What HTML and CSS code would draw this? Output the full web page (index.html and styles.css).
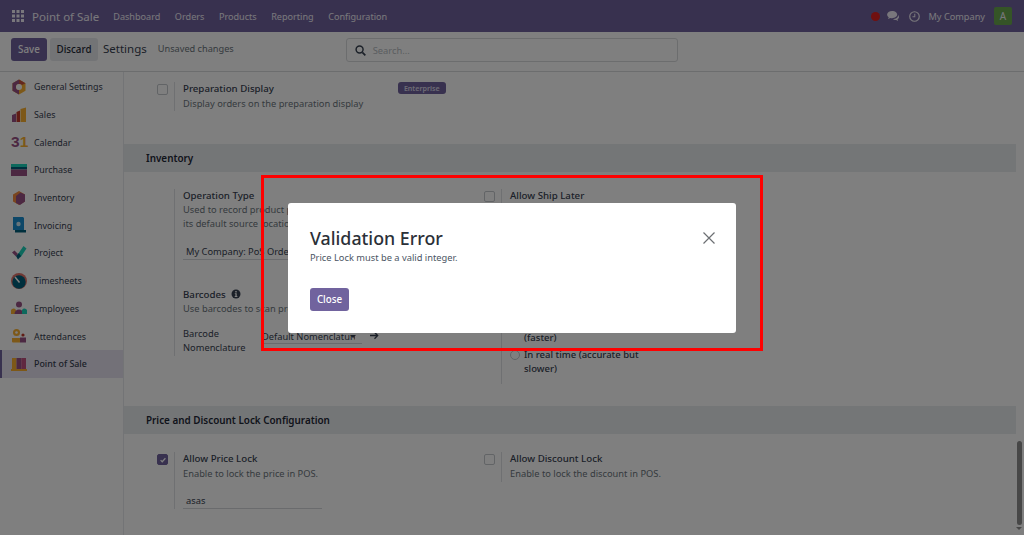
FILE: index.html
```html
<!DOCTYPE html>
<html lang="en">
<head>
<meta charset="utf-8">
<title>Point of Sale Settings</title>
<link rel="stylesheet" href="styles.css">
</head>
<body>
<div class="app">
  <header class="navbar">
    <svg class="apps" viewBox="0 0 12 12" width="12" height="12"><path d="M0 0h3v3H0zM4.500 0h3v3h-3zM9 0h3v3H9zM0 4.500h3v3H0zM4.500 4.500h3v3h-3zM9 4.500h3v3H9zM0 9h3v3H0zM4.500 9h3v3h-3zM9 9h3v3H9z"/></svg>
    <span class="brand">Point of Sale</span>
    <nav class="menu"><span>Dashboard</span><span>Orders</span><span>Products</span><span>Reporting</span><span>Configuration</span></nav>
    <div class="systray">
      <span class="dot"></span>
      <svg class="tray-icon" viewBox="0 0 14 12" width="13" height="11"><path d="M5.500 0C2.500 0 0 1.700 0 3.900c0 1.200.7 2.200 1.800 2.900L1 8.600l2.500-1.100c.6.200 1.300.3 2 .3 3 0 5.500-1.700 5.500-3.900S8.500 0 5.500 0z"/><path d="M12 4.300c.1 2.800-2.600 4.400-5.700 4.500 1 .8 2.300 1.100 3.600.9l2.100 1.100-.6-1.700c1-.6 1.600-1.500 1.600-2.500 0-.9-.4-1.700-1-2.300z"/></svg>
      <svg class="tray-clock" viewBox="0 0 12 12" width="11" height="11"><circle cx="6" cy="6" r="5.200" fill="none" stroke-width="1.300"/><path d="M6.300 3v3.400H3.800" fill="none" stroke-width="1.100"/></svg>
      <span class="company">My Company</span>
      <span class="avatar">A</span>
    </div>
  </header>
  <div class="control">
    <button class="btn save">Save</button>
    <button class="btn discard">Discard</button>
    <span class="crumb">Settings</span>
    <span class="unsaved">Unsaved changes</span>
    <div class="search">
      <svg viewBox="0 0 12 12" width="11" height="11"><circle cx="5" cy="5" r="3.800" fill="none" stroke-width="1.600"/><path d="M8 8l3.300 3.300" fill="none" stroke-width="1.800"/></svg>
      <span>Search...</span>
    </div>
  </div>
  <div class="body">
    <aside class="sidebar">
      <div class="tab"><svg viewBox="0 0 16 16"><path fill="#fbb130" d="M8 .5l6.500 3.700v7.600L8 15.500l-6.500-3.700V4.200z"/><path fill="#985184" d="M8 .5L1.500 4.200v7.600L8 15.500V11a3 3 0 0 1 0-6z"/><path fill="#c9503f" d="M8 .5l6.500 3.700L11 6a3 3 0 0 0-3-1z"/><circle cx="8" cy="8" r="3" fill="#fff"/></svg><span>General Settings</span></div>
      <div class="tab"><svg viewBox="0 0 16 16"><path fill="#985184" d="M1 8l4-1.500V15H1z"/><path fill="#c0392b" d="M5.500 5L9 3.500V15H5.500z"/><path fill="#fbb130" d="M9.500 2L15 .5V15H9.500z"/></svg><span>Sales</span></div>
      <div class="tab"><span class="cal"><b class="c3">3</b><b class="c1">1</b></span><span>Calendar</span></div>
      <div class="tab"><svg viewBox="0 0 16 16" class="wide"><path fill="#1ad3bb" d="M0 2h16v3H0z"/><path fill="#005e7a" d="M0 5h16v2.500H0z"/><path fill="#985184" d="M0 7.500h16V14H0z"/></svg><span>Purchase</span></div>
      <div class="tab"><svg viewBox="0 0 16 16"><path fill="#f58a3c" d="M8 1l6 3.500v7L8 15l-6-3.500v-7z"/><path fill="#985184" d="M9.500 2.500L14 4.500v7L9 15l-4-2V6z"/></svg><span>Inventory</span></div>
      <div class="tab"><svg viewBox="0 0 16 16"><path fill="#1a8fd1" d="M2 0h10l1 1v12H2z"/><path fill="#005e7a" d="M4 13h11v2.500H4z"/><circle cx="7.500" cy="7" r="2.200" fill="#cfe8f5"/></svg><span>Invoicing</span></div>
      <div class="tab"><svg viewBox="0 0 16 16"><path fill="#1ad3bb" d="M7 9l5.500-8 3 2.500-6 9z"/><path fill="#985184" d="M1 7.500L3.500 5.500 7 9 5 11.500z"/><path fill="#005e7a" d="M5 11l3-3 2 3-3 3.500z"/></svg><span>Project</span></div>
      <div class="tab"><svg viewBox="0 0 16 16"><circle cx="8" cy="8" r="8" fill="#e0736a"/><circle cx="8" cy="9" r="6.700" fill="#005e7a"/><path d="M8.500 9.500L4 4" stroke="#fff" stroke-width="1.500"/></svg><span>Timesheets</span></div>
      <div class="tab"><svg viewBox="0 0 16 16" class="wide"><circle cx="8" cy="4.500" r="3" fill="#985184"/><path fill="#fbb130" d="M0 14a3 3 0 0 1 5-4v4z"/><path fill="#985184" d="M3.500 14a4.500 4.500 0 0 1 9 0z"/><path fill="#1ad3bb" d="M11 14v-4a3 3 0 0 1 5 4z"/></svg><span>Employees</span></div>
      <div class="tab"><svg viewBox="0 0 16 16"><circle cx="5.500" cy="4.500" r="3.500" fill="#fbb130"/><circle cx="5.500" cy="4.500" r="1.300" fill="#fff"/><circle cx="12" cy="7" r="1.600" fill="#c0392b"/><path fill="#fbb130" d="M1 10h8v4.500H2a1 1 0 0 1-1-1z"/><path fill="#985184" d="M9 9.500h6v5H9z"/></svg><span>Attendances</span></div>
      <div class="tab active"><svg viewBox="0 0 16 16" class="wide"><path fill="#fbb130" d="M1 2h4.500v11H1z"/><path fill="#985184" d="M5.500 2h4.800v11H5.500z"/><path fill="#c0507f" d="M10.300 2H15v11h-4.700z"/><path fill="#fbb130" d="M0 13h16v2H0z"/></svg><span>Point of Sale</span></div>
    </aside>
    <main class="settings">
      <div class="block first">
        <div class="setting">
          <span class="check"></span>
          <div class="pane">
            <div class="title">Preparation Display<span class="badge">Enterprise</span></div>
            <div class="desc">Display orders on the preparation display</div>
          </div>
        </div>
      </div>
      <h2 class="section">Inventory</h2>
      <div class="block grid inv">
        <div class="setting">
          <span class="check none"></span>
          <div class="pane tall-left">
            <div class="title">Operation Type</div>
            <div class="desc">Used to record product pickings for PoS orders,<br>its default source location is the warehouse</div>
            <div class="field op">My Company: PoS Orders</div>
            <div class="title gap">Barcodes <svg class="info" viewBox="0 0 10 10" width="10" height="10"><circle cx="5" cy="5" r="4.500"/><path d="M4.300 2h1.400v1.400H4.300zM3.800 4.200h1.900v2.900h.7v.9H3.700v-.9h.7v-2h-.6z" fill="#fff"/></svg></div>
            <div class="desc">Use barcodes to scan products, customer cards, etc.</div>
            <div class="nomen">
              <span class="nomen-label">Barcode Nomenclature</span>
              <div class="field sel"><span class="sel-text">Default Nomenclature</span><i class="caret"></i></div>
              <svg class="arrow" viewBox="0 0 10 10" width="9" height="9"><path d="M0 5h8M5 1.500L8.500 5 5 8.500" fill="none" stroke-width="1.500"/></svg>
            </div>
          </div>
        </div>
        <div class="setting">
          <span class="check"></span>
          <div class="pane tall-right">
            <div class="title">Allow Ship Later</div>
            <div class="opts">
              <div class="opt">(faster)</div>
              <div class="opt radio-row"><span class="radio"></span>In real time (accurate but slower)</div>
            </div>
          </div>
        </div>
      </div>
      <h2 class="section">Price and Discount Lock Configuration</h2>
      <div class="block grid lockgrid">
        <div class="setting">
          <span class="check on"><svg viewBox="0 0 10 10" width="8" height="8"><path d="M2 5.200l2 2 4-4.400" fill="none" stroke="#fff" stroke-width="1.500"/></svg></span>
          <div class="pane">
            <div class="title">Allow Price Lock</div>
            <div class="desc">Enable to lock the price in POS.</div>
            <div class="field lock">asas</div>
          </div>
        </div>
        <div class="setting">
          <span class="check"></span>
          <div class="pane short">
            <div class="title">Allow Discount Lock</div>
            <div class="desc">Enable to lock the discount in POS.</div>
          </div>
        </div>
      </div>
      <div class="scroll-thumb"></div>
      <div class="scroll-arrow"></div>
    </main>
  </div>
</div>
<div class="backdrop"></div>
<div class="annotation"></div>
<div class="modal">
  <div class="modal-head">
    <h1>Validation Error</h1>
    <svg class="x" viewBox="0 0 12 12" width="12" height="12"><path d="M.5.5l11 11M11.500.5l-11 11" fill="none" stroke="#6c6f73" stroke-width="1.200"/></svg>
  </div>
  <p>Price Lock must be a valid integer.</p>
  <button class="btn close">Close</button>
</div>
</body>
</html>
```
FILE: styles.css
```css
* { box-sizing: border-box; }
html, body { margin: 0; height: 535px; overflow: hidden; }
body { font-family: "Noto Sans", "Open Sans", sans-serif; font-size: 10px; color: #374151; background: #fff; }
.app { display: flex; flex-direction: column; height: 535px; }
.navbar { flex: 0 0 32px; display: flex; align-items: center; background: #71639e; color: #f2eff8; padding: 0 12px; }
.apps { fill: #f2eff8; margin-right: 8px; }
.brand { font-size: 11.500px; margin-right: 14px; }
.menu { display: flex; gap: 14.500px; font-size: 9.100px; }
.systray { margin-left: auto; display: flex; align-items: center; }
.dot { width: 9px; height: 9px; border-radius: 50%; background: #e02020; margin-right: 7px; }
.tray-icon { fill: #f2eff8; margin-right: 9px; }
.tray-clock { stroke: #f2eff8; margin-right: 8px; }
.company { font-size: 9.200px; margin-right: 9px; }
.avatar { width: 18px; height: 18px; border-radius: 2px; background: #6aa84f; display: flex; align-items: center; justify-content: center; font-size: 10px; }
.control { flex: 0 0 40px; display: flex; align-items: flex-start; padding: 6px 11px 0; background: #fff; border-bottom: 1px solid #d8dadd; }
.btn { border: 0; border-radius: 3px; font: 500 9.800px "Noto Sans", sans-serif; height: 23px; padding: 0; }
.save { width: 36px; background: #71639e; color: #fff; }
.discard { width: 48px; margin-left: 3px; background: #e7e9ed; color: #1f2937; }
.crumb { font-size: 11.500px; line-height: 22px; margin-left: 5px; color: #374151; }
.unsaved { font-size: 9.200px; line-height: 22px; margin-left: 11px; color: #6c757d; }
.search { margin-left: 112px; width: 332px; height: 24px; border: 1px solid #d8dadd; border-radius: 3px; display: flex; align-items: center; padding-left: 8px; gap: 7px; color: #b6bbc1; font-size: 9.300px; }
.search svg { stroke: #374151; }
.body { flex: 1; display: flex; min-height: 0; }
.sidebar { flex: 0 0 124px; padding-top: 1px; border-right: 1px solid #e7e9ed; background: #fff; }
.tab { height: 27.700px; display: flex; align-items: center; padding-left: 11px; font-size: 8.900px; color: #374151; }
.tab svg, .cal { width: 16px; height: 16px; margin-right: 7px; flex: none; }
.active { background: #e6e2f0; box-shadow: inset 2px 0 0 #71639e; font-weight: 500; }
.cal { display: flex; font: 700 15.500px/16px "Liberation Sans", sans-serif; }
.c3 { color: #985184; }
.c1 { color: #fbb130; }
.settings { position: relative; flex: 1; min-width: 0; padding-right: 8px; }
.block { padding: 10px 0 0 33px; }
.first { height: 72px; }
.grid { display: grid; grid-template-columns: 327px 327px; }
.lockgrid { padding-top: 18px; }
.setting { display: flex; align-items: flex-start; }
.check { flex: none; width: 11px; height: 11px; border: 1px solid #c4c8cd; border-radius: 2px; margin-top: 2px; display: flex; align-items: center; justify-content: center; }
.check.none { visibility: hidden; }
.check.on { background: #71639e; border-color: #71639e; }
.pane { margin-left: 6px; padding-left: 8px; border-left: 1px solid #dfe1e5; }
.title { font-size: 9.700px; font-weight: 500; line-height: 14px; color: #374151; }
.desc { font-size: 9.300px; line-height: 14px; margin-top: 1px; color: #6c757d; }
.inv .desc { margin-top: 0; }
.badge { display: inline-block; margin-left: 124px; position: relative; top: -1px; background: #71639e; color: #ddd8ea; font-size: 7.100px; font-weight: 600; line-height: 12px; padding: 0 6px; border-radius: 3px; }
.section { margin: 0; height: 28px; line-height: 28px; padding-left: 22px; font-size: 9.900px; font-weight: 600; color: #1f2937; background: #e9ecef; }
.inv { height: 234px; padding-top: 17px; }
.tall-left { height: 167px; width: 300px; }
.tall-right { height: 195px; width: 290px; }
.opts { margin-top: 128px; }
.opt { font-size: 9.500px; line-height: 14px; font-weight: 500; color: #374151; padding-left: 14px; width: 150px; }
.radio-row { position: relative; margin-top: 3px; }
.radio { position: absolute; left: 0; top: 2px; width: 10px; height: 10px; border: 1px solid #c4c8cd; border-radius: 50%; }
.field { font-size: 9.300px; color: #374151; border-bottom: 1px solid #d4d7db; line-height: 15px; padding-left: 3px; }
.op { margin-top: 13px; width: 140px; }
.gap { margin-top: 28px; }
.nomen { display: flex; align-items: flex-start; margin-top: 11px; }
.nomen-label { width: 79px; font-size: 9.300px; line-height: 14px; }
.sel { width: 100px; height: 17px; line-height: 17px; position: relative; padding: 0 7px 0 0; }
.sel-text { display: block; height: 16px; margin-top: 1px; white-space: nowrap; overflow: hidden; }
.caret { position: absolute; right: 6px; top: 8px; border: 3px solid transparent; border-top-color: #374151; border-bottom: 0; }
.arrow { stroke: #374151; margin: 4px 0 0 8px; }
.info { fill: #374151; margin-left: 3px; vertical-align: -1px; }
.lock { margin-top: 12px; width: 139px; height: 16px; }
.short { height: 30px; }
.scroll-thumb { position: absolute; right: 2px; top: 369px; width: 5px; height: 84px; border-radius: 3px; background: #8e8e8e; }
.scroll-arrow { position: absolute; right: 2px; top: 455px; border: 3px solid transparent; border-top-color: #8e8e8e; border-bottom: 0; }
.backdrop { position: fixed; inset: 0; background: rgba(0,0,0,.5); }
.annotation { position: fixed; left: 261px; top: 175px; width: 502px; height: 176px; border: 3px solid #f00; }
.modal { position: fixed; left: 288px; top: 203px; width: 448px; height: 130px; background: #fff; border-radius: 3px; padding: 22px 21px 0 22px; color: #374151; }
.modal-head { display: flex; justify-content: space-between; align-items: center; }
.modal h1 { margin: 0; font-size: 17.800px; font-weight: 500; line-height: 26px; color: #2b3038; }
.modal p { margin: 0; font-size: 9.300px; line-height: 14px; color: #4b5563; }
.close { margin-top: 23px; width: 39px; background: #71639e; color: #fff; display: block; }
```
